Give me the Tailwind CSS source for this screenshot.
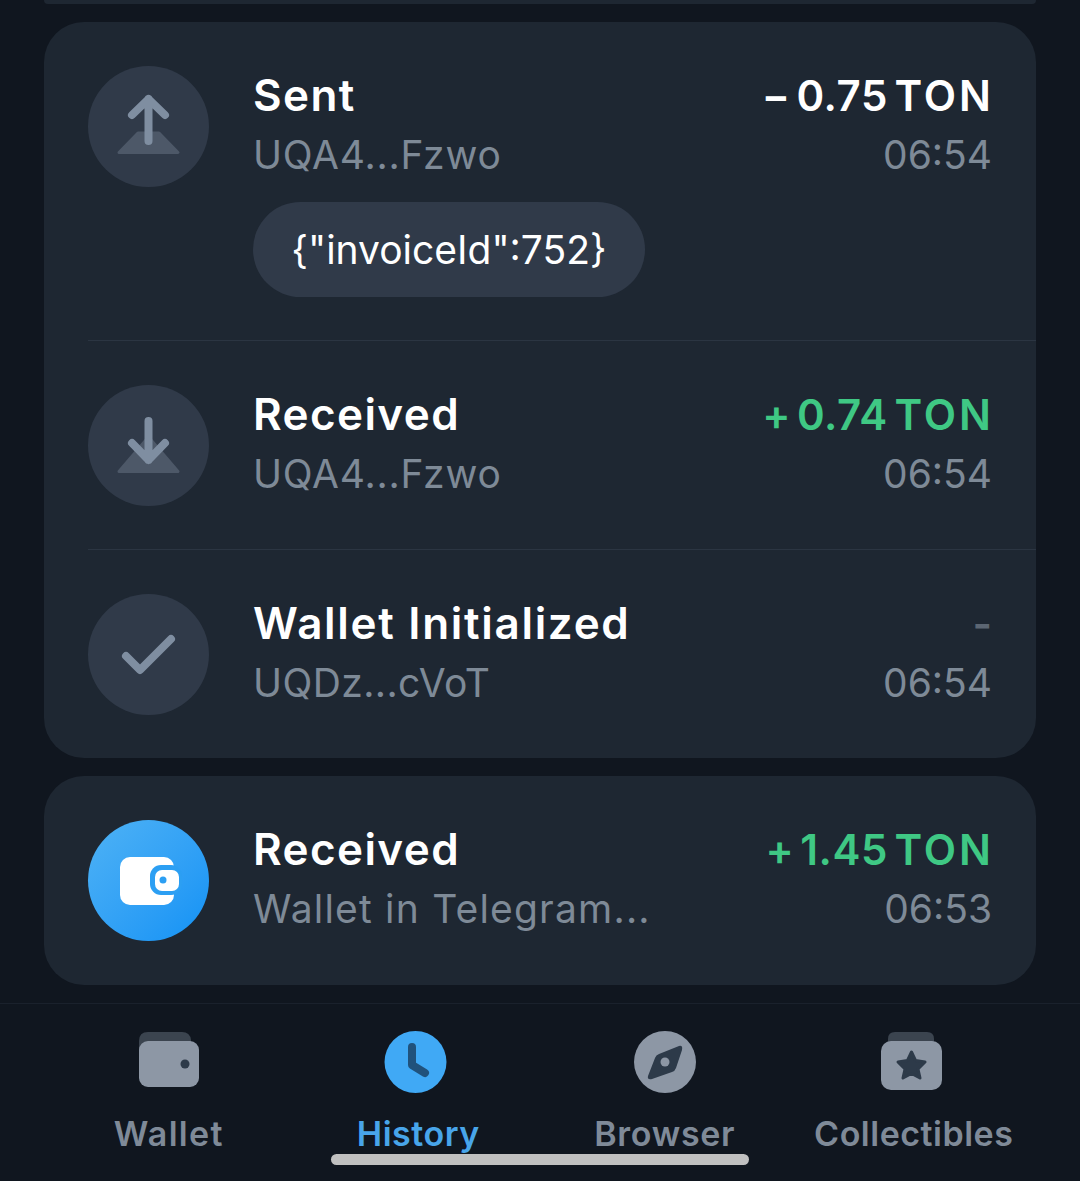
<!DOCTYPE html>
<html lang="en">

<head>
    <meta charset="UTF-8">
    <meta name="viewport" content="width=device-width, initial-scale=1.0">
    <title>History</title>
    <script src="https://cdn.jsdelivr.net/npm/@tailwindcss/browser@4"></script>
</head>

<body class="bg-[#10161f] font-['Inter','Liberation_Sans',sans-serif]">
    <div class="relative w-[1080px] h-[1181px] overflow-hidden flex flex-col">
        <!-- end of the previous card -->
        <div class="mx-[44px] h-[4px] mb-[18px] bg-[#1e2732] rounded-b-[40px]"></div>

        <!-- Transactions group -->
        <div class="mx-[44px] h-[736px] bg-[#1e2732] rounded-[40px] flex flex-col">
            <!-- Sent -->
            <div class="h-[318px] pl-[44px] pr-[44px] pt-[44px] flex gap-[44px]">
                <div class="w-[121px] h-[121px] shrink-0 rounded-full bg-[#303a49] flex items-center justify-center">
                    <svg width="121" height="121" viewBox="0 0 121 121">
                        <path d="M50 67 H71 L90 86.5 H31 Z" fill="#4d5868" stroke="#4d5868" stroke-width="3" stroke-linejoin="round" />
                        <path d="M60.5 75 V33 M44 49 L60.5 33 L77 49" fill="none" stroke="#7f8ea1" stroke-width="8" stroke-linecap="round" stroke-linejoin="round" />
                    </svg>
                </div>
                <div class="flex-1 min-w-0">
                    <div class="flex justify-between items-center h-[58px]">
                        <span class="text-[44px] font-semibold text-white tracking-[1.4px]">Sent</span>
                        <span class="text-[42px] font-semibold text-white -mr-[2px] [word-spacing:-4px]">− <span class="tracking-[0.5px]">0.75</span> <span class="tracking-[3px]">TON</span></span>
                    </div>
                    <div class="flex justify-between items-center h-[60px] pt-[2px]">
                        <span class="text-[39px] text-[#7e8a97] tracking-[0.8px]">UQA4...Fzwo</span>
                        <span class="text-[39px] text-[#7e8a97]">06:54</span>
                    </div>
                    <div class="mt-[18px] w-[392px] h-[95px] rounded-[48px] bg-[#303a49] flex items-center justify-center pt-[2px]">
                        <span class="text-[39px] text-white">{"invoiceId":752}</span>
                    </div>
                </div>
            </div>

            <!-- Received -->
            <div class="ml-[44px] border-t border-[#2b3542] h-[209px] pr-[44px] pt-[44px] flex gap-[44px]">
                <div class="w-[121px] h-[121px] shrink-0 rounded-full bg-[#303a49] flex items-center justify-center">
                    <svg width="121" height="121" viewBox="0 0 121 121">
                        <path d="M60.5 52 L90 86.5 H31 Z" fill="#4d5868" stroke="#4d5868" stroke-width="3" stroke-linejoin="round" />
                        <path d="M60.5 36 V75 M44 58 L60.5 75 L77 58" fill="none" stroke="#7f8ea1" stroke-width="8" stroke-linecap="round" stroke-linejoin="round" />
                    </svg>
                </div>
                <div class="flex-1 min-w-0">
                    <div class="flex justify-between items-center h-[58px]">
                        <span class="text-[44px] font-semibold text-white tracking-[1.4px]">Received</span>
                        <span class="text-[42px] font-semibold text-[#3fc884] -mr-[2px] [word-spacing:-4px]">+ <span class="tracking-[0.5px]">0.74</span> <span class="tracking-[3px]">TON</span></span>
                    </div>
                    <div class="flex justify-between items-center h-[60px] pt-[2px]">
                        <span class="text-[39px] text-[#7e8a97] tracking-[0.8px]">UQA4...Fzwo</span>
                        <span class="text-[39px] text-[#7e8a97]">06:54</span>
                    </div>
                </div>
            </div>

            <!-- Wallet Initialized -->
            <div class="ml-[44px] border-t border-[#2b3542] h-[209px] pr-[44px] pt-[44px] flex gap-[44px]">
                <div class="w-[121px] h-[121px] shrink-0 rounded-full bg-[#303a49] flex items-center justify-center">
                    <svg width="121" height="121" viewBox="0 0 121 121">
                        <path d="M38 62 L52 76 L83 45" fill="none" stroke="#7f8ea1" stroke-width="8" stroke-linecap="round" stroke-linejoin="round" />
                    </svg>
                </div>
                <div class="flex-1 min-w-0">
                    <div class="flex justify-between items-center h-[58px]">
                        <span class="text-[44px] font-semibold text-white tracking-[1.7px]">Wallet Initialized</span>
                        <span class="text-[42px] font-semibold text-[#5c6673]">-</span>
                    </div>
                    <div class="flex justify-between items-center h-[60px] pt-[2px]">
                        <span class="text-[39px] text-[#7e8a97] tracking-[0.4px]">UQDz...cVoT</span>
                        <span class="text-[39px] text-[#7e8a97]">06:54</span>
                    </div>
                </div>
            </div>
        </div>

        <!-- Wallet in Telegram -->
        <div class="mx-[44px] mt-[18px] h-[209px] bg-[#1e2732] rounded-[40px] pl-[44px] pr-[44px] pt-[44px] flex gap-[44px]">
            <div class="w-[121px] h-[121px] shrink-0 rounded-full bg-gradient-to-br from-[#4db2f5] to-[#0f92f5] flex items-center justify-center">
                <svg width="121" height="121" viewBox="0 0 121 121">
                    <rect x="32" y="37" width="54" height="48" rx="10" fill="#fff" />
                    <rect x="62" y="45" width="32" height="30" rx="11" fill="#2c9ff3" />
                    <rect x="67" y="50" width="24" height="21" rx="7" fill="#fff" />
                    <circle cx="75" cy="60" r="3.5" fill="#2c9ff3" />
                </svg>
            </div>
            <div class="flex-1 min-w-0">
                <div class="flex justify-between items-center h-[58px]">
                    <span class="text-[44px] font-semibold text-white tracking-[1.4px]">Received</span>
                    <span class="text-[42px] font-semibold text-[#3fc884] -mr-[2px] [word-spacing:-4px]">+ <span class="tracking-[0.5px]">1.45</span> <span class="tracking-[3px]">TON</span></span>
                </div>
                <div class="flex justify-between items-center h-[60px] pt-[2px]">
                    <span class="text-[39px] text-[#7e8a97] tracking-[1.2px]">Wallet in Telegram...</span>
                    <span class="text-[39px] text-[#7e8a97]">06:53</span>
                </div>
            </div>
        </div>

        <!-- Tab bar -->
        <div class="mt-[18px] flex-1 border-t border-[#1a212c] grid grid-cols-[1fr_1fr_1fr_1fr] px-[45px] pt-[27px]">
            <div class="flex flex-col items-center">
                <svg width="64" height="64" viewBox="0 0 64 64">
                    <path d="M2 20 V10 Q2 1 11 1 H45 Q53 1 54 9 V20 Z" fill="#3b444f" />
                    <rect x="2" y="10" width="60" height="46" rx="9" fill="#8d97a5" />
                    <circle cx="48" cy="33" r="4.5" fill="#2d3a49" />
                </svg>
                <span class="mt-[17px] text-[34px] leading-[44px] font-semibold text-[#7f8a98] tracking-[1.3px]">Wallet</span>
            </div>
            <div class="flex flex-col items-center">
                <svg width="64" height="64" viewBox="0 0 64 64">
                    <circle cx="31.5" cy="31" r="31" fill="#40a9f5" />
                    <path d="M28 16 V34 L41 42" fill="none" stroke="#20527c" stroke-width="8" stroke-linecap="round" stroke-linejoin="round" />
                </svg>
                <span class="mt-[17px] ml-[4px] text-[34px] leading-[44px] font-semibold text-[#48a5ea] tracking-[0.5px]">History</span>
            </div>
            <div class="flex flex-col items-center">
                <svg width="64" height="64" viewBox="0 0 64 64">
                    <circle cx="33" cy="31" r="31" fill="#8d97a5" />
                    <path d="M47 15 Q51 14 50 19 L44 37 Q43 40 40 41 L20 48 Q15 49 16 45 L23 27 Q24 24 27 23 Z" fill="#2d3a49" />
                    <circle cx="33" cy="31" r="4.5" fill="#8d97a5" />
                </svg>
                <span class="mt-[17px] ml-[2px] text-[34px] leading-[44px] font-semibold text-[#7f8a98] tracking-[0.7px]">Browser</span>
            </div>
            <div class="flex flex-col items-center">
                <svg width="64" height="64" viewBox="0 0 64 64">
                    <path d="M9 12 V8 Q9 1 16 1 H48 Q55 1 55 8 V12 Z" fill="#3b444f" />
                    <rect x="2" y="10" width="61" height="49" rx="10" fill="#8d97a5" />
                    <path d="M32.5 21 L36.5 29.5 L46 31 L39 38 L41 47 L32.5 42.5 L24 47 L26 38 L19 31 L28.5 29.5 Z" fill="#2d3a49" stroke="#2d3a49" stroke-width="3" stroke-linejoin="round" />
                </svg>
                <span class="mt-[17px] ml-[5px] text-[34px] leading-[44px] font-semibold text-[#7f8a98] tracking-[0.5px]">Collectibles</span>
            </div>
        </div>

        <!-- Home indicator -->
        <div class="absolute left-[331px] top-[1154px] w-[418px] h-[11px] rounded-full bg-[#c0c0c0]"></div>
    </div>
</body>

</html>
